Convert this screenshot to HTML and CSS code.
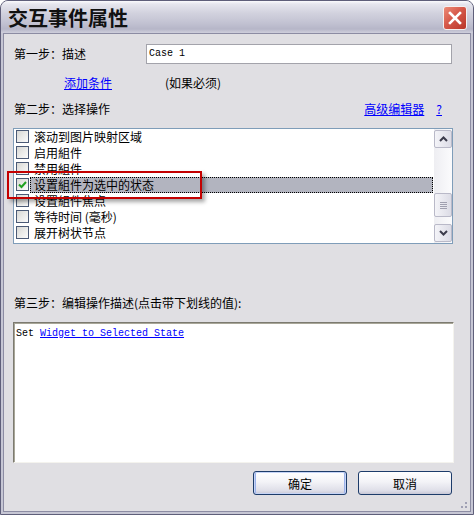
FILE: index.html
```html
<!DOCTYPE html>
<html lang="zh">
<head>
<meta charset="utf-8">
<title>交互事件属性</title>
<link rel="stylesheet" href="styles.css">
</head>
<body>
<div class="window">
  <div class="titlebar">
    <span class="title">交互事件属性</span>
    <span class="close">
      <svg width="14" height="14" viewBox="0 0 14 14"><path d="M2 2 L12 12 M12 2 L2 12" stroke="#fff" stroke-width="2.6" stroke-linecap="square" fill="none"/></svg>
    </span>
  </div>
  <div class="body">
    <div class="row step1">
      <span class="label">第一步：描述</span>
      <div class="input">Case 1</div>
    </div>
    <div class="row cond">
      <a class="link add">添加条件</a>
      <span class="hint">(如果必须)</span>
    </div>
    <div class="row step2">
      <span class="label">第二步：选择操作</span>
      <span class="links"><a class="link">高级编辑器</a><a class="link">?</a></span>
    </div>
    <div class="listbox">
      <div class="items">
        <div class="item"><span class="cb"></span><span class="txt">滚动到图片映射区域</span></div>
        <div class="item"><span class="cb"></span><span class="txt">启用組件</span></div>
        <div class="item"><span class="cb"></span><span class="txt">禁用組件</span></div>
        <div class="item selected"><span class="cb checked"><svg width="11" height="11" viewBox="0 0 11 11"><path d="M2 5.5 L4.5 8 L9 3" stroke="#21a121" stroke-width="2" fill="none"/></svg></span><span class="txt">设置組件为选中的状态</span></div>
        <div class="item"><span class="cb"></span><span class="txt">设置組件焦点</span></div>
        <div class="item"><span class="cb"></span><span class="txt">等待时间 (毫秒)</span></div>
        <div class="item"><span class="cb"></span><span class="txt">展开树状节点</span></div>
      </div>
      <div class="scrollbar">
        <div class="sbtn"><svg width="9" height="6" viewBox="0 0 9 6"><path d="M1 5 L4.5 1.5 L8 5" stroke="#3c3c4c" stroke-width="2" fill="none"/></svg></div>
        <div class="track">
          <div class="thumb"><svg width="7" height="8" viewBox="0 0 7 8"><path d="M0 1.5H7M0 3.5H7M0 5.5H7M0 7.5H7" stroke="#a0a0b0" stroke-width="1"/></svg></div>
        </div>
        <div class="sbtn"><svg width="9" height="6" viewBox="0 0 9 6"><path d="M1 1 L4.5 4.5 L8 1" stroke="#3c3c4c" stroke-width="2" fill="none"/></svg></div>
      </div>
      <div class="redbox"></div>
    </div>
    <div class="label step3">第三步：编辑操作描述(点击带下划线的值):</div>
    <div class="textarea">Set <a class="link">Widget to Selected State</a></div>
    <div class="buttons">
      <button class="btn default">确定</button>
      <button class="btn">取消</button>
    </div>
    <div class="grip"></div>
  </div>
</div>
</body>
</html>
```

FILE: styles.css
```css
* { box-sizing: border-box; margin: 0; padding: 0; }
html, body { width: 474px; height: 515px; overflow: hidden; }
body {
  background: #fff;
  font-family: "Noto Sans CJK SC", "Liberation Sans", sans-serif;
  font-size: 12px;
  line-height: 16px;
  color: #000;
}
.window {
  width: 474px;
  height: 515px;
  border: 1px solid #5f5f7a;
  border-radius: 8px 8px 0 0;
  background: #c6c6d4;
  display: flex;
  flex-direction: column;
  overflow: hidden;
}
.titlebar {
  height: 32px;
  flex: none;
  display: flex;
  align-items: center;
  justify-content: space-between;
  padding: 2px 6px 0 7px;
  background: linear-gradient(#fbfbfd 0, #e6e6ee 3px, #d2d2de 12px, #c2c2d2 22px, #b6b6c8 28px, #cfcfdc 32px);
}
.title {
  font-size: 20px;
  font-weight: bold;
  line-height: 24px;
  color: #111;
}
.close {
  width: 24px;
  height: 24px;
  border-radius: 3px;
  border: 1px solid #f4f0f0;
  background: linear-gradient(135deg, #ec8c78 0%, #d6594a 45%, #b83428 100%);
  display: flex;
  align-items: center;
  justify-content: center;
}
.body {
  flex: 1;
  margin: 0 2px 2px;
  border: 1px solid #8c8ca3;
  background: #e0dfe3;
  padding: 10px 0 0 9px;
  position: relative;
  display: flex;
  flex-direction: column;
}
.row { display: flex; align-items: center; }
.step1 { height: 20px; }
.step1 .label { width: 133px; padding-left: 1px; }
.input {
  width: 306px;
  height: 20px;
  border: 1px solid #a3a3ab;
  background: #fff;
  font-family: "Liberation Mono", monospace;
  font-size: 10px;
  line-height: 16px;
  padding: 1px 2px;
}
.cond { margin-top: 11px; height: 16px; }
.link { color: #0000ff; text-decoration: underline; cursor: pointer; }
.add { margin-left: 51px; }
.hint { margin-left: 53px; }
.step2 { margin-top: 10px; height: 16px; width: 440px; justify-content: space-between; }
.step2 .label { padding-left: 1px; }
.links { display: flex; gap: 12px; padding-right: 11px; }
.listbox {
  margin-top: 11px;
  width: 440px;
  height: 116px;
  border: 1px solid #7f9db9;
  background: #fff;
  display: flex;
  position: relative;
}
.items { flex: 1; display: flex; flex-direction: column; }
.item { height: 16px; display: flex; align-items: flex-start; padding-left: 2px; }
.cb {
  width: 13px;
  height: 13px;
  margin-top: 1px;
  border: 1px solid #4b5a76;
  background: linear-gradient(135deg, #d8d8d4 0%, #ececea 55%, #fbfbfb 100%);
  display: flex;
  align-items: center;
  justify-content: center;
  flex: none;
}
.txt { flex: 1; height: 16px; padding-left: 3px; margin-left: 1px; margin-right: 1px; border: 1px solid transparent; line-height: 14px; }
.selected .txt { background: #b2b4bf; border: 1px dotted #000; }
.scrollbar {
  width: 18px;
  display: flex;
  flex-direction: column;
  background: linear-gradient(90deg, #eeeef2, #fbfbfd);
  padding: 1px 0 1px 0;
}
.sbtn, .thumb {
  width: 18px;
  border: 1px solid #b9b9c8;
  border-radius: 2px;
  background: linear-gradient(90deg, #f4f4f8, #dcdce6);
  display: flex;
  align-items: center;
  justify-content: center;
}
.sbtn { height: 18px; flex: none; }
.track { flex: 1; display: flex; flex-direction: column; justify-content: flex-end; padding-bottom: 7px; }
.thumb { height: 24px; }
.redbox {
  position: absolute;
  left: -7px;
  top: 42px;
  width: 195px;
  height: 28px;
  border: 2px solid #c40000;
  box-shadow: 3px 3px 4px rgba(0, 0, 0, 0.35);
}
.step3 { margin-top: 51px; height: 16px; padding-left: 1px; }
.textarea {
  margin-top: 11px;
  width: 441px;
  height: 141px;
  background: #fff;
  border: 1px solid;
  border-color: #7c7a70 #f4f3ee #f4f3ee #7c7a70;
  box-shadow: inset 1px 1px #a8a698;
  font-family: "Liberation Mono", monospace;
  font-size: 10px;
  line-height: 16px;
  padding: 3px 2px;
}
.buttons { margin-top: 8px; width: 439px; display: flex; justify-content: flex-end; gap: 11px; }
.btn {
  width: 94px;
  height: 24px;
  border: 1px solid #1d3c6a;
  border-radius: 3px;
  background: linear-gradient(#ffffff 0%, #f3f3f7 45%, #dedee8 85%, #c8c8d6 100%);
  font-family: "Noto Sans CJK SC", sans-serif;
  font-size: 12px;
  color: #000;
}
.default { box-shadow: inset 0 0 0 1px #c6d4f6, inset 2px 0 #9bb2ea, inset -2px 0 #9bb2ea; }
.grip {
  position: absolute;
  right: 1px;
  bottom: 1px;
  width: 12px;
  height: 12px;
  background:
    radial-gradient(circle at 1px 1px, #a0a0b4 1px, transparent 1.2px) 0 0 / 4px 4px;
  clip-path: polygon(100% 0, 100% 100%, 0 100%);
}
```
